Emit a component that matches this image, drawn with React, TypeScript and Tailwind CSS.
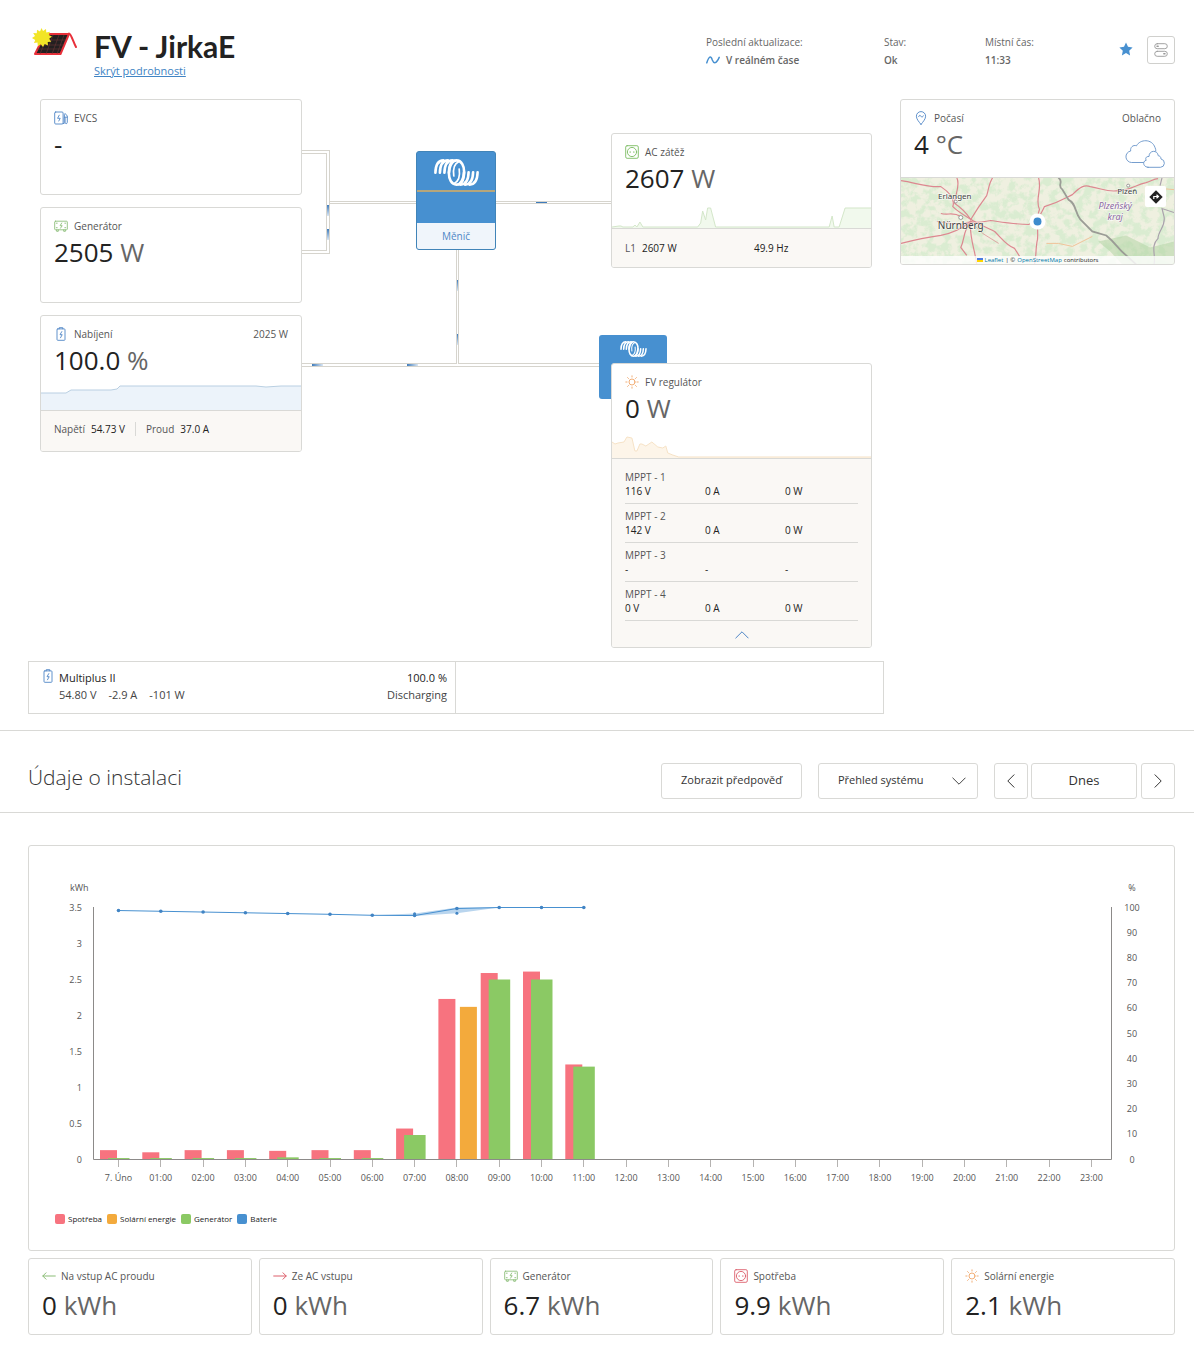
import { useState, type ReactNode } from "react";

const hours = Array.from({ length: 24 }, (_, i) => (i === 0 ? "7. Úno" : `${String(i).padStart(2, "0")}:00`));
const consumption = [0.13, 0.1, 0.13, 0.13, 0.12, 0.13, 0.13, 0.43, 2.23, 2.59, 2.61, 1.32];
const generator = [0.02, 0.02, 0.02, 0.02, 0.03, 0.02, 0.02, 0.34, 0, 2.5, 2.5, 1.29];
const solar = [0, 0, 0, 0, 0, 0, 0, 0, 2.12, 0, 0, 0];
const battery = [98.8, 98.5, 98.2, 97.9, 97.6, 97.3, 96.9, 96.8, 99.6, 100, 100, 100];

const mppts = [
    { name: "MPPT - 1", values: ["116 V", "0 A", "0 W"] },
    { name: "MPPT - 2", values: ["142 V", "0 A", "0 W"] },
    { name: "MPPT - 3", values: ["-", "-", "-"] },
    { name: "MPPT - 4", values: ["0 V", "0 A", "0 W"] },
];

const legend = [
    { name: "Spotřeba", color: "bg-[#f7737f]" },
    { name: "Solární energie", color: "bg-[#f3aa3c]" },
    { name: "Generátor", color: "bg-[#8bc964]" },
    { name: "Baterie", color: "bg-[#4790d0]" },
];

/* ---------- icons ---------- */

const iconProps = { fill: "none", stroke: "currentColor", strokeLinecap: "round", strokeLinejoin: "round" } as const;

const EvcsIcon = () => (
    <svg viewBox="0 0 14 14" className="h-[14px] w-[14px] text-[#4f86c6]" {...iconProps} strokeWidth="0.9">
        <rect x="0.7" y="1" width="8.4" height="12" rx="1" />
        <path d="M5.2 4.2 3.6 7.3h2.6L4.8 10" />
        <path d="M9.2 12.5h1V6.5h.9v4.8c0 1.8 2.2 1.8 2.2 0V5L11 2.4M10.4 3.6v2.6h2.8" />
    </svg>
);

const GeneratorIcon = () => (
    <svg viewBox="0 0 14 14" className="h-[14px] w-[14px] text-[#8dc07a]" {...iconProps} strokeWidth="0.9">
        <rect x="0.7" y="2.2" width="12.6" height="8.6" rx="0.8" />
        <path d="M2.6 10.9v1.4h1.7v-1.4M9.7 10.9v1.4h1.7v-1.4M7.7 4 6.1 6.7h2.1L6.5 9.2M2.3 4.2h.9M10.8 4.2h.9M2.3 8.7h.9M10.8 8.7h.9" />
    </svg>
);

const BatteryIcon = () => (
    <svg viewBox="0 0 14 14" className="h-[14px] w-[14px] text-[#4f86c6]" {...iconProps} strokeWidth="0.9">
        <rect x="3" y="1.9" width="8" height="11.4" rx="0.8" />
        <path d="M5.2 1.8V.7h3.6v1.1M7.8 4.6 6 7.7h2.2L6.5 10.8" />
    </svg>
);

const SocketIcon = ({ color }: { color: string }) => (
    <svg viewBox="0 0 14 14" className={`h-[14px] w-[14px] ${color}`} {...iconProps} strokeWidth="0.9">
        <rect x="0.7" y="0.7" width="12.6" height="12.6" rx="1.4" />
        <circle cx="7" cy="7" r="4.6" />
        <path d="M4.9 7h.6M8.5 7h.6" strokeWidth="1.1" />
    </svg>
);

const SunIcon = () => (
    <svg viewBox="0 0 14 14" className="h-[14px] w-[14px] text-[#f0a566]" {...iconProps} strokeWidth="0.9">
        <circle cx="7" cy="7" r="3" />
        <path d="M7 .8v1.2M7 12v1.2M.8 7H2M12 7h1.2M2.6 2.6l.9.9M10.5 10.5l.9.9M2.6 11.4l.9-.9M10.5 3.5l.9-.9" />
    </svg>
);

const PinIcon = () => (
    <svg viewBox="0 0 14 14" className="h-[14px] w-[14px] text-[#4f86c6]" {...iconProps} strokeWidth="0.9">
        <path d="M7 13.4C4.6 10.4 2.4 8 2.4 5.2a4.6 4.6 0 0 1 9.2 0c0 2.8-2.2 5.2-4.6 8.2Z" />
        <path d="M4.7 5.6c.7-1.8 1.5-1.6 2.2-.4.8 1.3 1.6 1.4 2.4-.4" />
    </svg>
);

const ArrowIcon = ({ left = false }: { left?: boolean }) => (
    <svg viewBox="0 0 14 14" className={`h-[14px] w-[14px] ${left ? "text-[#8bbd77]" : "text-[#dd5e6b]"}`} {...iconProps}>
        <path d={left ? "M13.3 7H.8M4 3.8.8 7 4 10.2" : "M.7 7h12.5M10 3.8 13.2 7 10 10.2"} />
    </svg>
);

const Chevron = ({ d, className }: { d: string; className: string }) => (
    <svg viewBox="0 0 14 14" className={className} {...iconProps}>
        <path d={d} />
    </svg>
);

// one half of the coil, the other is the same turned by 180 degrees
const coil = (
    <>
        <path d="M1.4 13.8C1.6 6 4.5 1.6 9.4 1.4" />
        <path d="M5.9 13.8C6.1 6 9 1.6 13.9 1.4" />
        <path d="M10.4 13.8C10.6 6 13.5 1.6 18.4 1.4" />
        <path d="M14.9 13.8C15.1 6 18 1.4 22.5 1.4c5 0 8 5.600 7.500 12.400-.3 5-2.200 9-5 11.400" />
        <path d="M19.800 17C18.800 10 20.500 4.500 25 2.500" strokeWidth="1.700" />
    </>
);

const VictronLogo = ({ className }: { className: string }) => (
    <svg viewBox="0 0 45 27" className={className} fill="none" stroke="white" strokeWidth="2.6" strokeLinecap="round">
        <g>{coil}</g>
        <g transform="rotate(180 22.5 13.5)">{coil}</g>
    </svg>
);

const SolarLogo = () => (
    <svg viewBox="0 0 46 30" className="h-[30px] w-[46px]">
        <path d="M13 6h24L28.500 26H3z" fill="#231f20" stroke="#e8303a" strokeWidth="2" strokeLinejoin="round" />
        <path d="M16 7 8 26M21 7l-7 19M27 7l-7 19M32 7l-7 19M11 12h23M8 17h24M5 21h25" stroke="#6b3638" strokeWidth="0.6" />
        <path d="M37 5.5c2 0 4 8 7 13.5" fill="none" stroke="#e8303a" strokeWidth="2" strokeLinecap="round" />
        <path d="m9.5 0 1.5 3 3-2 .3 3.4 3.7-.6-1.2 3.3 3.2 1.4-2.8 2.3 2 3-3.5.2.3 3.5-3.3-1.5-1.7 3-2.2-2.7-3 1.9-.3-3.6-3.5.3L3.2 12 0 10l3-2L1.2 5l3.6.2L5 1.7l3 1.7Z" fill="#f2e527" />
    </svg>
);

const CloudIcon = () => (
    <svg viewBox="0 0 40 28" className="h-7 w-10 text-[#6793c8]" {...iconProps} strokeWidth="0.9">
        <path d="M18.5 22.5H6.5a5.8 5.8 0 0 1-.8-11.5C5 7.5 8 4.5 11.5 5.8 15-1 27-1.5 30 7.5c.6 1 .8 2.5.8 3.5" />
        <path d="M23 27.3h12.5a4.2 4.2 0 0 0 .5-8.3c0-2.3-1.5-3.3-2.7-3.2C32.5 9.5 24 10 24 16.5c-3.2-.3-4 2.5-2.7 3.7-4 .8-3.5 6.8 1.7 7.1Z" fill="white" />
    </svg>
);

/* ---------- shared bits ---------- */

type CardProps = {
    icon: ReactNode;
    label: string;
    value: string;
    unit?: string;
    aside?: ReactNode;
    spark?: ReactNode;
};

const Reading = ({ value, unit }: { value: string; unit?: string }) => (
    <p className="text-[26px] leading-8 font-medium text-[#222]">
        {value} {unit && <span className="font-normal text-[#666]">{unit}</span>}
    </p>
);

const CardHead = ({ icon, label, value, unit, aside, spark }: CardProps) => (
    <div className="flex h-[94px] flex-col">
        <div className="px-[13px] pt-[10px]">
            <div className="flex h-4 items-center gap-[6px] text-[10px]">
                {icon}
                <h2>{label}</h2>
                <div className="ml-auto">{aside}</div>
            </div>
            <div className="mt-[2px]">
                <Reading value={value} unit={unit} />
            </div>
        </div>
        {spark && <div className="mt-auto">{spark}</div>}
    </div>
);

const Sparkline = ({ points, fill, stroke }: { points: string; fill: string; stroke: string }) => (
    <svg viewBox="0 0 260 26" preserveAspectRatio="none" className="block h-[26px] w-full">
        <polygon points={`0,26 ${points} 260,26`} fill={fill} />
        <polyline points={points} fill="none" stroke={stroke} />
    </svg>
);

const card = "overflow-hidden rounded-[3px] border border-[#d9d9d6] bg-white";
const control = "h-9 rounded-[3px] border border-[#d9d9d6] bg-white text-[#333]";

/* ---------- sections ---------- */

const Header = () => (
    <header className="flex items-start pt-7 pr-[19px] pl-8">
        <SolarLogo />
        <div className="ml-4">
            <h1 className="font-['Lato',sans-serif] text-[30px] leading-9 font-bold text-[#222]">FV - JirkaE</h1>
            <a href="#details" className="block text-[11px] leading-[14px] text-[#4184c4] underline">Skrýt podrobnosti</a>
        </div>
        <dl className="ml-auto flex pt-[5px] text-[10px] leading-[18px] text-[#666]">
            <div className="w-[178px]">
                <dt>Poslední aktualizace:</dt>
                <dd className="flex items-center gap-[6px] font-semibold">
                    <svg viewBox="0 0 14 8" className="h-2 w-[14px] text-[#4790d0]" {...iconProps} strokeWidth="1.5">
                        <path d="M.8 6.8C3 0 4.8-.5 6.3 4 8 8.3 10.5 7.5 13.2 1.4" />
                    </svg>
                    V reálném čase
                </dd>
            </div>
            <div className="w-[101px]">
                <dt>Stav:</dt>
                <dd className="font-semibold">Ok</dd>
            </div>
            <div className="w-[134px]">
                <dt>Místní čas:</dt>
                <dd className="font-semibold">11:33</dd>
            </div>
        </dl>
        <button aria-label="Oblíbené" className="mt-[14px]">
            <svg viewBox="0 0 14 14" className="h-[14px] w-[14px]">
                <path d="m7 .5 2 4.3 4.6.6-3.4 3.3.9 4.7L7 11.1l-4.1 2.3.9-4.7L.4 5.4 5 4.8Z" fill="#4790d0" />
            </svg>
        </button>
        <button aria-label="Ovládání" className="mt-2 ml-[14px] flex h-7 w-7 items-center justify-center rounded-[3px] border border-[#d0d0cd]">
            <svg viewBox="0 0 14 14" className="h-[14px] w-[14px] text-[#999]" {...iconProps} strokeWidth="0.9">
                <rect x="0.7" y="0.7" width="12.6" height="5" rx="2.5" />
                <rect x="0.7" y="8.3" width="12.6" height="5" rx="2.5" />
                <path d="M3 3.2h1.2M9.8 10.8H11" strokeWidth="1.4" />
            </svg>
        </button>
    </header>
);

const Connectors = () => (
    <svg viewBox="0 0 309 300" className="block h-[300px] w-[309px]" fill="none">
        <defs>
            <linearGradient id="flowX">
                <stop offset="0" stopColor="#3f7cbc" />
                <stop offset="1" stopColor="#dbe7f4" />
            </linearGradient>
            <linearGradient id="flowY" x1="0" y1="0" x2="0" y2="1">
                <stop offset="0" stopColor="#3f7cbc" />
                <stop offset="1" stopColor="#dbe7f4" />
            </linearGradient>
        </defs>
        <g stroke="#d6d4cd">
            <path d="M0 53H26V153H0M0 266H309" strokeWidth="4" />
            <path d="M26 103.5H309M155.5 150V265" strokeWidth="3" />
        </g>
        <g stroke="white">
            <path d="M0 53H26V153H0M0 266H309" strokeWidth="2" />
            <path d="M28 103.5H309M155.5 150V265" strokeWidth="1" />
        </g>
        <rect x="25" y="106" width="2" height="11" fill="url(#flowY)" />
        <rect x="25" y="130" width="2" height="11" fill="url(#flowY)" />
        <rect x="155" y="181" width="1" height="11" fill="url(#flowY)" />
        <rect x="155" y="235" width="1" height="11" fill="url(#flowY)" />
        <rect x="10" y="265" width="11" height="2" fill="url(#flowX)" />
        <rect x="105" y="265" width="11" height="2" fill="url(#flowX)" />
        <rect x="234" y="103" width="11" height="1" fill="#3f7cbc" />
    </svg>
);

const Inverter = () => (
    <div className="absolute top-[52px] left-[114px] h-[99px] w-20 overflow-hidden rounded-[3px] border border-[#4184b8] bg-[#4790d0]">
        <div className="flex h-10 justify-center border-b-2 border-[#b5a67c] pt-[7px]">
            <VictronLogo className="h-[27px] w-[45px]" />
        </div>
        <div className="h-[31px]" />
        <p className="h-[26px] bg-[#f0f5fb] text-center text-[10px] leading-[27px] text-[#4f86c6]">Měnič</p>
    </div>
);

const Diagram = () => (
    <div className="flex shrink-0 items-start">
        <div className="flex w-[262px] flex-col gap-3">
            <section className={card}>
                <CardHead icon={<EvcsIcon />} label="EVCS" value="-" />
            </section>
            <section className={card}>
                <CardHead icon={<GeneratorIcon />} label="Generátor" value="2505" unit="W" />
            </section>
            <section className={card}>
                <CardHead
                    icon={<BatteryIcon />}
                    label="Nabíjení"
                    value="100.0"
                    unit="%"
                    aside="2025 W"
                    spark={<Sparkline points="0,9 25,9 30,6 70,6 76,5 79,2 215,2 225,3 240,2 260,2" fill="#ecf3fa" stroke="#b9cfe2" />}
                />
                <div className="flex h-[41px] items-center border-t border-[#d9d9d6] bg-[#faf8f5] px-[13px] pb-1 text-[10px]">
                    <span>Napětí</span>
                    <span className="ml-[6px] text-[#222]">54.73 V</span>
                    <span className="ml-[10px] h-[14px] border-l border-[#d9d9d6] pl-[10px]" />
                    <span>Proud</span>
                    <span className="ml-[6px] text-[#222]">37.0 A</span>
                </div>
            </section>
        </div>

        <div className="relative w-[309px]">
            <Connectors />
            <Inverter />
        </div>

        <div className="w-[261px] pt-[34px]">
            <section className={card}>
                <CardHead
                    icon={<SocketIcon color="text-[#7cbc62]" />}
                    label="AC zátěž"
                    value="2607"
                    unit="W"
                    spark={
                        <Sparkline
                            points="0,25 7,24 9,24 11,25 21,25 23,23 25,25 28,20 31,25 86,25 89,21 91,9 94,18 96,6 99,6 104,25 218,25 221,14 223,25 228,25 234,6 260,6"
                            fill="#f1f9ed"
                            stroke="#d3e6c9"
                        />
                    }
                />
                <div className="flex h-[39px] items-center border-t border-[#d9d9d6] bg-[#faf8f5] px-[13px] text-[10px]">
                    <span>L1</span>
                    <span className="ml-[6px] w-28 text-[#222]">2607 W</span>
                    <span className="text-[#222]">49.9 Hz</span>
                </div>
            </section>

            <div className="relative mt-[95px]">
                <div className="absolute -top-7 -left-3 flex h-16 w-[68px] justify-center rounded-[3px] bg-[#4790d0] pt-[6px]">
                    <VictronLogo className="h-4 w-[27px]" />
                </div>
                <section className={`relative ${card}`}>
                    <CardHead
                        icon={<SunIcon />}
                        label="FV regulátor"
                        value="0"
                        unit="W"
                        spark={
                            <Sparkline
                                points="0,10 3,12 6,11 12,10 15,5 20,6 23,19 25,19 28,12 30,12 34,14 40,10 46,15 51,16 54,14 56,21 61,23 67,25 260,25"
                                fill="#fdf5e9"
                                stroke="#f6e2c6"
                            />
                        }
                    />
                    <div className="border-t border-[#d9d9d6] bg-[#faf8f5] px-[13px] pt-[6px]">
                        <table className="w-full table-fixed text-left text-[10px] leading-[14px]">
                            <colgroup>
                                <col className="w-20" />
                                <col className="w-20" />
                                <col />
                            </colgroup>
                            {mppts.map(mppt => (
                                <tbody key={mppt.name} className="border-b border-[#d9d9d6]">
                                    <tr>
                                        <th colSpan={3} scope="rowgroup" className="pt-[5px] font-normal">{mppt.name}</th>
                                    </tr>
                                    <tr className="text-[#222]">
                                        {mppt.values.map((value, i) => (
                                            <td key={i} className="pb-[5px]">{value}</td>
                                        ))}
                                    </tr>
                                </tbody>
                            ))}
                        </table>
                        <button aria-label="Sbalit" className="flex h-[26px] w-full items-center justify-center pt-[2px]">
                            <Chevron d="M.8 10 7 3.8 13.2 10" className="h-[14px] w-[14px] text-[#4f86c6]" />
                        </button>
                    </div>
                </section>
            </div>
        </div>
    </div>
);

const WeatherMap = () => (
    <div className="relative h-[87px] border-t border-[#d9d9d6]">
        <svg viewBox="0 0 274 87" preserveAspectRatio="xMidYMid slice" className="block h-full w-full" fill="none">
            <defs>
                <filter id="woods" x="0" y="0" width="100%" height="100%">
                    <feTurbulence type="fractalNoise" baseFrequency="0.12" numOctaves="4" seed="8" />
                    <feColorMatrix values="0 0 0 0 0.7  0 0 0 0 0.84  0 0 0 0 0.64  5 0 0 0 -2.1" />
                </filter>
            </defs>
            <rect width="274" height="87" fill="#eff0e0" />
            <rect width="274" height="87" filter="url(#woods)" />
            <path d="M198 64 226 58 250 70 274 64V87H222L210 74Z" fill="#aed1a0" opacity="0.5" />
            <g stroke="#dd8790" strokeWidth="1.2">
                <path d="M0 3c15 2 25 7 40 6 12 8 14 14 12 20 6 6 14 10 20 14 10 6 16 8 22 11 8 8 12 14 20 17l5 8" />
                <path d="M56 0c4 8-2 16-2 26 6 4 12 10 16 16 6-10 10-16 16-24 2-6 2-12 6-18" />
                <path d="M0 66c16-4 26-6 40-8 10-2 20-6 30-14 6 2 14 0 20-1 14 2 26 4 38 4 10-2 14-14 16-18 14-4 20-8 28-12 8-8 12-10 18-8 12 2 18 6 28 4 12 0 18-6 28-8 6-2 8-4 12-4" />
                <path d="M138 0c4 12-4 22 1 32-4 10-1 20-2 30-2 8-1 16-3 25" />
                <path d="M70 43c-2 16 4 28 6 44M70 44c-8 10-6 18-10 26l6 8M40 36c8 2 12-2 20 3" />
                <path d="m36 44 22 3 12-3M70 44l12 12 16 10" strokeWidth="0.7" />
            </g>
            <path d="m146 66 12 0 14 3 20-10M250 10l24 2" stroke="#f0c39a" />
            <path d="M158 0c6 4-2 8 4 12l6 10c8 4 6 12 12 20l12 12 14 4c10 8 12 14 20 20l10 9" stroke="#9b9c96" strokeWidth="1.8" />
            <path d="m262 0-2 8M254 87c2-10-4-18 4-26 0-8 8-12 6-22l-2-8 12 4" stroke="#aaa1ac" strokeWidth="1.2" />
            <g stroke="#777" strokeWidth="0.7" fill="white">
                <circle cx="55" cy="24" r="1.5" />
                <circle cx="60" cy="40" r="2" />
                <circle cx="228" cy="8" r="1.5" />
            </g>
            <g className="font-['Noto_Sans',sans-serif]" fill="#444" stroke="white" strokeOpacity="0.6" strokeWidth="1.5" paintOrder="stroke" textAnchor="middle">
                <text x="54" y="21" fontSize="8">Erlangen</text>
                <text x="60" y="52" fontSize="10">Nürnberg</text>
                <text x="227" y="16" fontSize="8">Plzeň</text>
                <text x="215" y="31" fontSize="9" fontStyle="italic" fill="#8d6aa5">Plzeňský</text>
                <text x="215" y="42" fontSize="9" fontStyle="italic" fill="#8d6aa5">kraj</text>
            </g>
            <circle cx="137" cy="44" r="8" fill="white" />
            <circle cx="137" cy="44" r="4" fill="#3d8bcd" />
        </svg>
        <button aria-label="Navigovat" className="absolute top-2 right-2 flex h-[21px] w-[21px] items-center justify-center rounded-[2px] bg-white">
            <svg viewBox="0 0 14 14" className="h-[14px] w-[14px]">
                <path d="M7 .3 13.7 7 7 13.7.3 7Z" fill="#222" />
                <path d="M4.8 9V6.5h4M7.5 4.7l2 1.8-2 1.8" fill="none" stroke="white" strokeWidth="1.2" />
            </svg>
        </button>
        <p className="absolute inset-x-0 bottom-0 flex h-2 items-center justify-center gap-[2px] bg-white/80 text-[6px] leading-none text-[#222]">
            <svg viewBox="0 0 6 4" className="h-1 w-[6px]">
                <rect width="6" height="2" fill="#4c7be1" />
                <rect y="2" width="6" height="2" fill="#ffd500" />
            </svg>
            <a href="#leaflet" className="text-[#0078a8]">Leaflet</a>
            <span>| ©</span>
            <a href="#osm" className="text-[#0078a8]">OpenStreetMap</a>
            <span>contributors</span>
        </p>
    </div>
);

const Weather = () => (
    <section className={`ml-7 flex-1 ${card}`}>
        <div className="flex h-[77px] justify-between pt-[10px] pr-[9px] pl-[13px]">
            <div>
                <div className="flex h-4 items-center gap-[6px] text-[10px]">
                    <PinIcon />
                    <h2>Počasí</h2>
                </div>
                <div className="mt-[2px]">
                    <Reading value="4" unit="°C" />
                </div>
            </div>
            <div className="flex flex-col items-end text-[10px] leading-4">
                <p className="pr-1">Oblačno</p>
                <div className="mt-[14px]">
                    <CloudIcon />
                </div>
            </div>
        </div>
        <WeatherMap />
    </section>
);

const BatteryStrip = () => (
    <div className="mt-[13px] ml-7 grid h-[53px] w-[856px] grid-cols-2 border border-[#d9d9d6] text-[11px] leading-[17px] text-[#444]">
        <div className="flex justify-between border-r border-[#d9d9d6] pt-[7px] pr-2 pl-3">
            <div className="flex gap-1">
                <BatteryIcon />
                <div>
                    <p className="font-medium text-[#222]">Multiplus II</p>
                    <p className="flex gap-3">
                        <span>54.80 V</span>
                        <span>-2.9 A</span>
                        <span>-101 W</span>
                    </p>
                </div>
            </div>
            <div className="text-right">
                <p className="font-medium text-[#222]">100.0 %</p>
                <p>Discharging</p>
            </div>
        </div>
    </div>
);

const Toolbar = () => {
    const [view, setView] = useState("system");

    return (
        <div className="mt-4 flex h-[83px] items-center border-y border-[#d9d9d6] pt-5 pr-[19px] pb-[2px] pl-7">
            <h2 className="mb-2 text-[21px] leading-7 font-light text-[#333]">Údaje o instalaci</h2>
            <button className={`ml-auto w-[141px] text-[11px] ${control}`}>Zobrazit předpověď</button>
            <div className="relative ml-4">
                <select
                    aria-label="Zobrazení"
                    value={view}
                    onChange={e => setView(e.target.value)}
                    className={`w-40 appearance-none pl-[19px] text-[11px] ${control}`}
                >
                    <option value="system">Přehled systému</option>
                    <option value="solar">Solární energie</option>
                </select>
                <Chevron d="M.8 4 7 10.2 13.2 4" className="pointer-events-none absolute top-[11px] right-3 h-[14px] w-[14px] text-[#444]" />
            </div>
            <button aria-label="Předchozí" className={`ml-4 flex w-[34px] items-center justify-center ${control}`}>
                <Chevron d="M10 .8 3.8 7 10 13.2" className="h-[14px] w-[14px]" />
            </button>
            <button className={`ml-[3px] w-[106px] text-[13px] ${control}`}>Dnes</button>
            <button aria-label="Další" className={`ml-1 flex w-[34px] items-center justify-center ${control}`}>
                <Chevron d="M4 .8 10.2 7 4 13.2" className="h-[14px] w-[14px]" />
            </button>
        </div>
    );
};

const baseY = 313.5;
const hourX = (i: number) => 89.5 + i * 42.3;
const energyY = (kwh: number) => baseY - kwh * 72;
const percentY = (p: number) => baseY - p * 2.52;

const Chart = () => (
    <svg viewBox="0 0 1145 350" className="block w-full">
        <g fontSize="9" fill="#555">
            <text x="41" y="45">kWh</text>
            <text x="1103" y="45" textAnchor="middle">%</text>
            {[0, 0.5, 1, 1.5, 2, 2.5, 3, 3.5].map(v => (
                <text key={v} x="53" y={energyY(v) + 3} textAnchor="end">{v}</text>
            ))}
            {[0, 10, 20, 30, 40, 50, 60, 70, 80, 90, 100].map(v => (
                <text key={v} x="1103" y={percentY(v) + 3} textAnchor="middle">{v}</text>
            ))}
            {hours.map((h, i) => (
                <text key={h} x={hourX(i)} y="335" textAnchor="middle">{h}</text>
            ))}
        </g>
        {consumption.map((v, i) => (
            <rect key={i} x={hourX(i) - 18.5} y={energyY(v)} width="17" height={v * 72} fill="#f7737f" />
        ))}
        {generator.map((v, i) => (
            <rect key={i} x={hourX(i) - 10.5} y={energyY(v)} width="21.5" height={v * 72} fill="#8bc964" />
        ))}
        {solar.map((v, i) => (
            <rect key={i} x={hourX(i) + 3} y={energyY(v)} width="17" height={v * 72} fill="#f3aa3c" />
        ))}
        <path d="M64.5 61V313.5H1082.5V61" fill="none" stroke="#8c8a89" />
        {hours.map((h, i) => (
            <path key={h} d={`M${Math.floor(hourX(i)) + 0.5} 314v7`} stroke="#b5b3b1" />
        ))}
        <polygon
            points={`${hourX(6)},${percentY(96.9)} ${hourX(7)},${percentY(97.6)} ${hourX(8)},${percentY(100)} ${hourX(9)},${percentY(100)} ${hourX(8)},${percentY(97.7)} ${hourX(7)},${percentY(96.6)}`}
            fill="#b9d5ee"
        />
        <polyline points={battery.map((v, i) => `${hourX(i)},${percentY(v)}`).join(" ")} fill="none" stroke="#4790d0" />
        {battery.map((v, i) => (
            <circle key={i} cx={hourX(i)} cy={percentY(v)} r="1.8" fill="#4184c4" />
        ))}
        <circle cx={hourX(7)} cy={percentY(97.5)} r="1.5" fill="#4184c4" />
        <circle cx={hourX(8)} cy={percentY(97.7)} r="1.5" fill="#4184c4" />
    </svg>
);

const Stat = ({ icon, label, value }: { icon: ReactNode; label: string; value: string }) => (
    <section className={`h-[77px] px-[13px] pt-[9px] ${card}`}>
        <div className="flex h-4 items-center gap-[5px] text-[10px]">
            {icon}
            <h2>{label}</h2>
        </div>
        <div className="mt-[5px]">
            <Reading value={value} unit="kWh" />
        </div>
    </section>
);

const App = () => (
    <div className="bg-white pb-[19px] font-['Open_Sans','Noto_Sans',sans-serif] text-[#555]">
        <Header />
        <main>
            <div className="mt-[21px] flex items-start pr-[19px] pl-10">
                <Diagram />
                <Weather />
            </div>
            <BatteryStrip />
            <Toolbar />
            <div className="mt-8 pr-[19px] pl-7">
                <section className={card}>
                    <Chart />
                    <ul className="flex gap-[5px] px-[26px] pt-[17px] pb-[25px] text-[8px] leading-3 text-[#222]">
                        {legend.map(item => (
                            <li key={item.name} className="flex items-center gap-[3px]">
                                <span className={`h-[10px] w-[10px] rounded-[2px] ${item.color}`} />
                                {item.name}
                            </li>
                        ))}
                    </ul>
                </section>
                <div className="mt-[7px] grid grid-cols-5 gap-[7px]">
                    <Stat icon={<ArrowIcon left />} label="Na vstup AC proudu" value="0" />
                    <Stat icon={<ArrowIcon />} label="Ze AC vstupu" value="0" />
                    <Stat icon={<GeneratorIcon />} label="Generátor" value="6.7" />
                    <Stat icon={<SocketIcon color="text-[#dd5e6b]" />} label="Spotřeba" value="9.9" />
                    <Stat icon={<SunIcon />} label="Solární energie" value="2.1" />
                </div>
            </div>
        </main>
    </div>
);

export default App;
